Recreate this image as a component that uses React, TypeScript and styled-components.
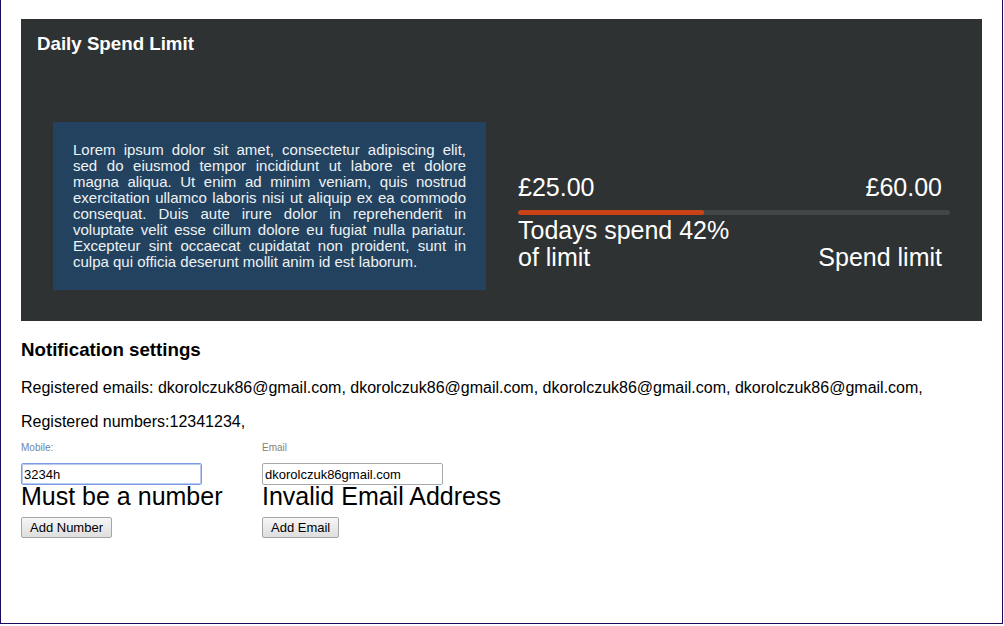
import React from "react";
import styled, { createGlobalStyle } from "styled-components";

const Global = createGlobalStyle`
  html, body { margin: 0; padding: 0; background: #fff; }
  body { font-family: "Liberation Sans", Arial, sans-serif; }
`;

const Page = styled.div`
  box-sizing: border-box;
  width: 1003px;
  height: 624px;
  border: 1px solid #1e0a5c;
  border-top: none;
  padding: 19px 20px 0 20px;
  box-shadow: 0 1px 0 #c8c8c8, 0 2px 0 #e6e6e6;
`;

const Panel = styled.section`
  background: #2e3233;
  height: 302px;
  box-sizing: border-box;
  padding: 14px 16px 0 16px;
  color: #fff;
`;

const PanelTitle = styled.h2`
  margin: 0;
  font-size: 18.72px;
  line-height: 22px;
  font-weight: bold;
`;

const PanelRow = styled.div`
  display: grid;
  grid-template-columns: 433px 432px;
  column-gap: 32px;
  margin: 67px 16px 0 16px;
  align-items: start;
`;

const InfoBox = styled.div`
  background: #22425f;
  height: 168px;
  box-sizing: border-box;
  padding: 20px 20px 0 20px;
  font-size: 15px;
  line-height: 16px;
  text-align: justify;
  color: #eef2f5;
`;

const Meter = styled.div`
  display: flex;
  flex-direction: column;
  padding-top: 52px;
  font-size: 25px;
  line-height: 27px;
`;

const AmountRow = styled.div`
  display: flex;
  justify-content: space-between;
  padding-right: 8px;
`;

const Track = styled.div`
  height: 5px;
  border-radius: 3px;
  background: #434647;
  margin-top: 9px;
  overflow: hidden;
`;

const Fill = styled.div`
  height: 100%;
  background: #c94317;
  border-radius: 3px;
`;

const CaptionRow = styled.div`
  display: flex;
  justify-content: space-between;
  align-items: flex-end;
  padding-right: 8px;
  margin-top: 2px;
`;

const Caption = styled.div<{ $right?: boolean }>`
  width: ${(p) => (p.$right ? "auto" : "225px")};
  text-align: ${(p) => (p.$right ? "right" : "left")};
`;

const Heading = styled.h3`
  margin: 18px 0 19px 0;
  font-size: 18.72px;
  line-height: 21px;
  font-weight: bold;
  color: #000;
`;

const Line = styled.p`
  margin: 0 0 16px 0;
  font-size: 16px;
  line-height: 18px;
  color: #000;
`;

const FormRow = styled.div`
  display: flex;
  margin-top: -5px;
`;

const Field = styled.div`
  width: 241px;
  display: flex;
  flex-direction: column;
  align-items: flex-start;
`;

const Label = styled.label<{ $focus?: boolean }>`
  font-size: 10px;
  line-height: 12px;
  color: ${(p) => (p.$focus ? "#6f83a6" : "#8b8073")};
`;

const Input = styled.input<{ $focus?: boolean }>`
  box-sizing: border-box;
  margin-top: 9px;
  width: 181px;
  height: 22px;
  padding: 1px 2px;
  font-family: "Liberation Sans", Arial, sans-serif;
  font-size: 13px;
  color: #000;
  border: 1px solid ${(p) => (p.$focus ? "#7a9be6" : "#a9a9a9")};
  border-radius: 2px;
  outline: ${(p) => (p.$focus ? "1px solid #b9c9f0" : "none")};
  outline-offset: -2px;
  background: #fff;
`;

const ErrorText = styled.div`
  font-size: 25px;
  line-height: 24px;
  margin-top: -1px;
  color: #000;
`;

const Button = styled.button`
  margin-top: 9px;
  height: 21px;
  padding: 0 8px;
  font-family: "Liberation Sans", Arial, sans-serif;
  font-size: 13px;
  color: #000;
  background: linear-gradient(#f6f6f6, #dedede);
  border: 1px solid #a6a6a6;
  border-radius: 2px;
`;

export default function App() {
  const pct = 43;
  const emails = Array(4).fill("dkorolczuk86@gmail.com");
  return (
    <>
      <Global />
      <Page>
        <Panel>
          <PanelTitle>Daily Spend Limit</PanelTitle>
          <PanelRow>
            <InfoBox>
              Lorem ipsum dolor sit amet, consectetur adipiscing elit, sed do eiusmod tempor
              incididunt ut labore et dolore magna aliqua. Ut enim ad minim veniam, quis nostrud
              exercitation ullamco laboris nisi ut aliquip ex ea commodo consequat. Duis aute irure
              dolor in reprehenderit in voluptate velit esse cillum dolore eu fugiat nulla pariatur.
              Excepteur sint occaecat cupidatat non proident, sunt in culpa qui officia deserunt
              mollit anim id est laborum.
            </InfoBox>
            <Meter>
              <AmountRow>
                <span>£25.00</span>
                <span>£60.00</span>
              </AmountRow>
              <Track>
                <Fill style={{ width: `${pct}%` }} />
              </Track>
              <CaptionRow>
                <Caption>Todays spend 42% of limit</Caption>
                <Caption $right>Spend limit</Caption>
              </CaptionRow>
            </Meter>
          </PanelRow>
        </Panel>
        <Heading>Notification settings</Heading>
        <Line>Registered emails: {emails.map((e) => `${e}, `).join("")}</Line>
        <Line>Registered numbers:12341234,</Line>
        <FormRow>
          <Field>
            <Label $focus>Mobile:</Label>
            <Input $focus defaultValue="3234h" />
            <ErrorText>Must be a number</ErrorText>
            <Button>Add Number</Button>
          </Field>
          <Field>
            <Label>Email</Label>
            <Input defaultValue="dkorolczuk86gmail.com" />
            <ErrorText>Invalid Email Address</ErrorText>
            <Button>Add Email</Button>
          </Field>
        </FormRow>
      </Page>
    </>
  );
}
